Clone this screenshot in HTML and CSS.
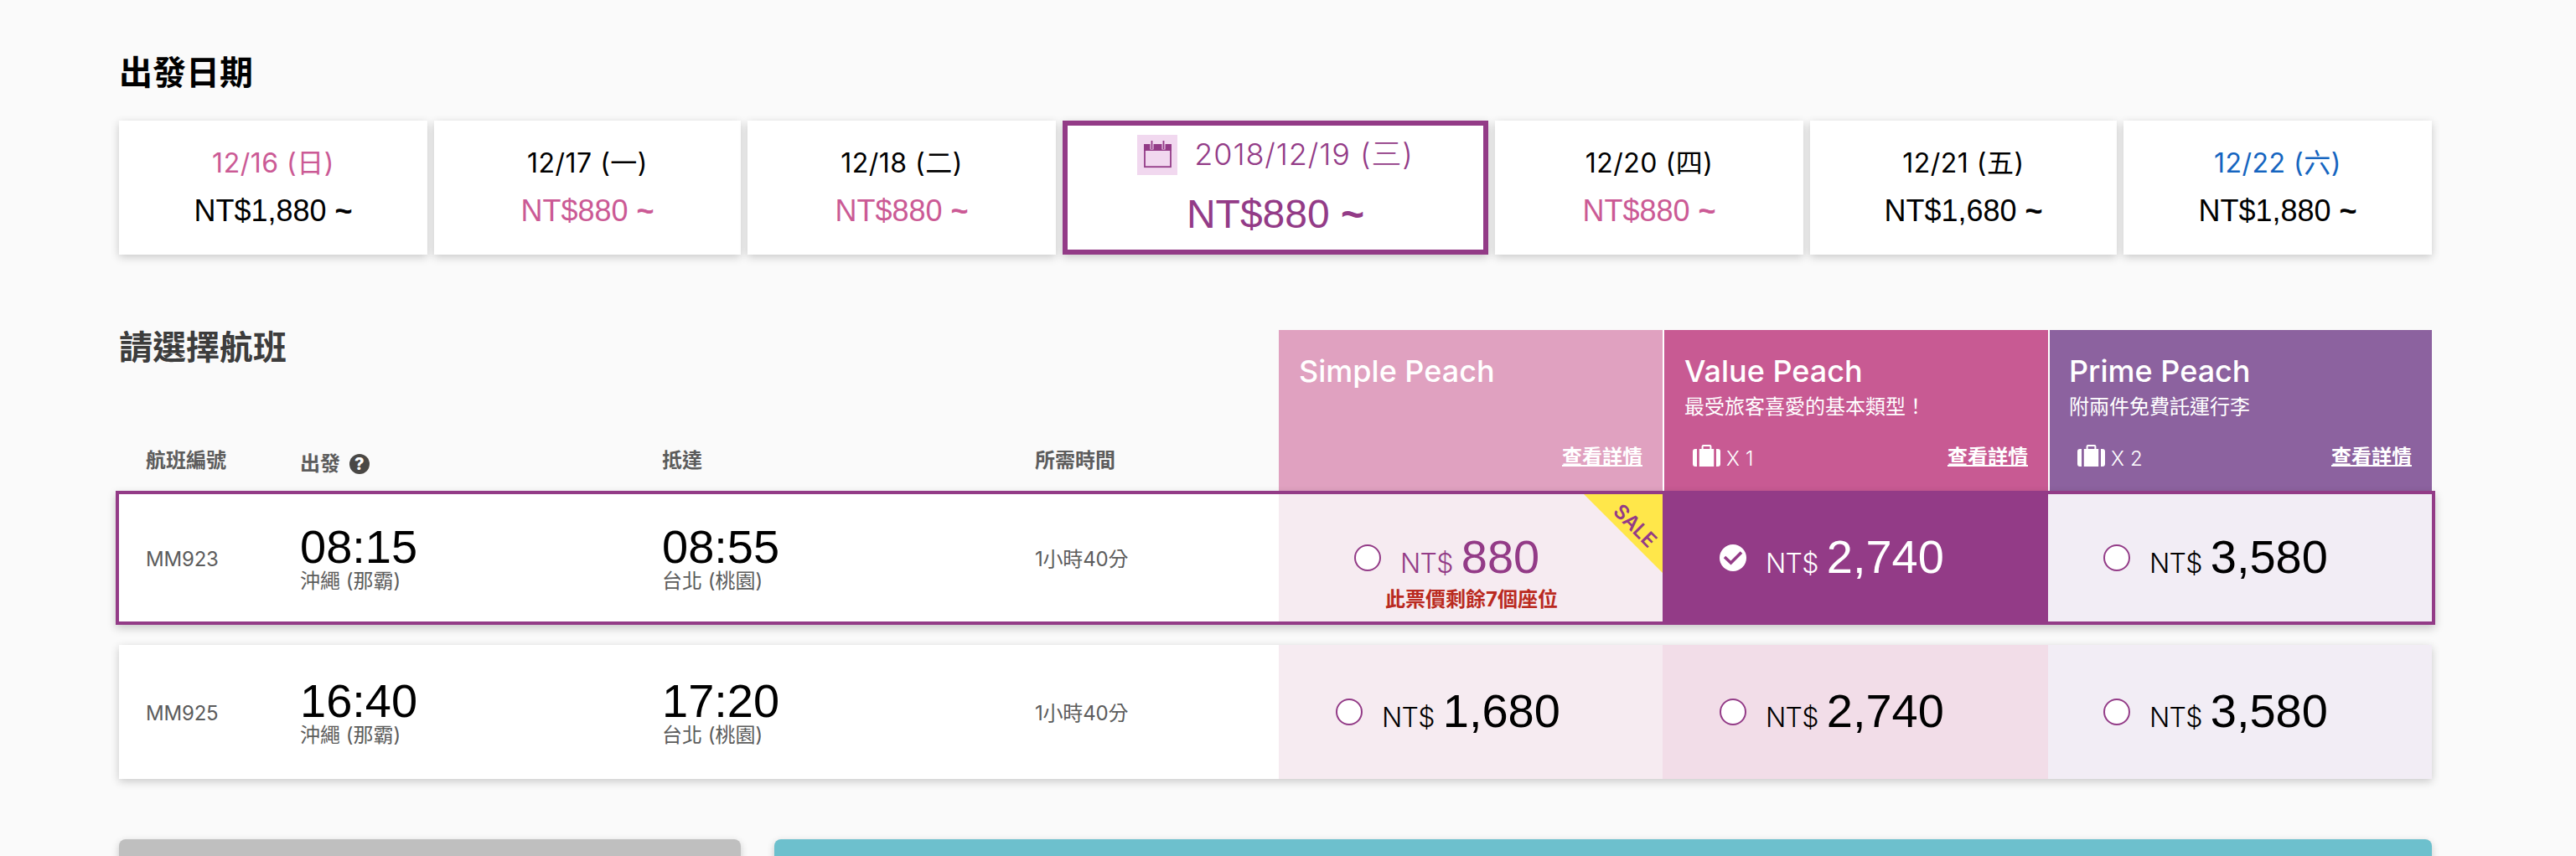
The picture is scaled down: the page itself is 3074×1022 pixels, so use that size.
FILE: index.html
```
<!DOCTYPE html>
<html lang="zh-Hant">
<head>
    <meta charset="UTF-8">
    <meta name="viewport" content="width=device-width, initial-scale=1.0">
    <title>請選擇航班</title>
    <link rel="stylesheet" href="styles.css">
</head>
<body>
    <main class="page">
        <h2 class="title title-date">出發日期</h2>
        <div class="dates">
            <div class="date-card">
                <div class="day sunday">12/16 (日)</div>
                <div class="low-price">NT$1,880 <b>~</b></div>
            </div>
            <div class="date-card narrow">
                <div class="day">12/17 (一)</div>
                <div class="low-price sale-price">NT$880 <b>~</b></div>
            </div>
            <div class="date-card">
                <div class="day">12/18 (二)</div>
                <div class="low-price sale-price">NT$880 <b>~</b></div>
            </div>
            <div class="date-card active">
                <div class="day">
                    <svg class="calendar" width="48" height="48" viewBox="0 0 48 48">
                        <rect width="48" height="48" fill="#f1d8ef"/>
                        <rect x="9" y="12" width="31" height="26.2" fill="none" stroke="#933b87" stroke-width="1.8"/>
                        <rect x="8" y="11" width="33" height="8" fill="#933b87"/>
                        <path d="M17.5 11v6.5M31.5 11v6.5" stroke="#f1d8ef" stroke-width="4"/>
                        <path d="M17.5 7v10M31.5 7v10" stroke="#933b87" stroke-width="1.8"/>
                    </svg>
                    <span>2018/12/19 (三)</span>
                </div>
                <div class="low-price">NT$880 <b>~</b></div>
            </div>
            <div class="date-card">
                <div class="day">12/20 (四)</div>
                <div class="low-price sale-price">NT$880 <b>~</b></div>
            </div>
            <div class="date-card narrow">
                <div class="day">12/21 (五)</div>
                <div class="low-price">NT$1,680 <b>~</b></div>
            </div>
            <div class="date-card">
                <div class="day saturday">12/22 (六)</div>
                <div class="low-price">NT$1,880 <b>~</b></div>
            </div>
        </div>

        <section class="flights">
            <div class="flights-head">
                <div class="head-left">
                    <h2 class="title">請選擇航班</h2>
                    <div class="labels">
                        <span>航班編號</span>
                        <span class="label-depart">出發 <i class="help">?</i></span>
                        <span>抵達</span>
                        <span>所需時間</span>
                    </div>
                </div>
                <div class="fare-head simple">
                    <h3>Simple Peach</h3>
                    <div class="fare-foot">
                        <a href="#">查看詳情</a>
                    </div>
                </div>
                <div class="fare-head value">
                    <h3>Value Peach</h3>
                    <p>最受旅客喜愛的基本類型！</p>
                    <div class="fare-foot">
                        <svg class="bag" width="33" height="26" viewBox="0 0 33 26" fill="#fff">
                            <path d="M5 5H3a3 3 0 0 0-3 3v15a3 3 0 0 0 3 3h2zM28 5h2a3 3 0 0 1 3 3v15a3 3 0 0 1-3 3h-2z"/>
                            <path d="M7.8 5h2.8V2a2 2 0 0 1 2-2h7.8a2 2 0 0 1 2 2v3h2.8v21H7.8zM12.6 2v3h7.8V2z" fill-rule="evenodd"/>
                        </svg>
                        <span>X 1</span>
                        <a href="#">查看詳情</a>
                    </div>
                </div>
                <div class="fare-head prime">
                    <h3>Prime Peach</h3>
                    <p>附兩件免費託運行李</p>
                    <div class="fare-foot">
                        <svg class="bag" width="33" height="26" viewBox="0 0 33 26" fill="#fff">
                            <path d="M5 5H3a3 3 0 0 0-3 3v15a3 3 0 0 0 3 3h2zM28 5h2a3 3 0 0 1 3 3v15a3 3 0 0 1-3 3h-2z"/>
                            <path d="M7.8 5h2.8V2a2 2 0 0 1 2-2h7.8a2 2 0 0 1 2 2v3h2.8v21H7.8zM12.6 2v3h7.8V2z" fill-rule="evenodd"/>
                        </svg>
                        <span>X 2</span>
                        <a href="#">查看詳情</a>
                    </div>
                </div>
            </div>

            <div class="flight selected">
                <div class="info">MM923</div>
                <div class="stop"><b>08:15</b><span>沖繩 (那霸)</span></div>
                <div class="stop"><b>08:55</b><span>台北 (桃園)</span></div>
                <div class="info">1小時40分</div>
                <div class="fare simple on-sale">
                    <div class="price"><span class="radio"></span><small>NT$</small>880</div>
                    <div class="note">此票價剩餘7個座位</div>
                    <div class="ribbon"><span>SALE</span></div>
                </div>
                <div class="fare value checked">
                    <div class="price">
                        <svg class="check" width="32" height="32" viewBox="0 0 32 32">
                            <circle cx="16" cy="16" r="16" fill="#fff"/>
                            <path d="M6 15l7.5 7L26 9.5" fill="none" stroke="#933b87" stroke-width="3.6"/>
                        </svg>
                        <small>NT$</small>2,740
                    </div>
                </div>
                <div class="fare prime">
                    <div class="price"><span class="radio"></span><small>NT$</small>3,580</div>
                </div>
            </div>

            <div class="flight">
                <div class="info">MM925</div>
                <div class="stop"><b>16:40</b><span>沖繩 (那霸)</span></div>
                <div class="stop"><b>17:20</b><span>台北 (桃園)</span></div>
                <div class="info">1小時40分</div>
                <div class="fare simple">
                    <div class="price"><span class="radio"></span><small>NT$</small>1,680</div>
                </div>
                <div class="fare value">
                    <div class="price"><span class="radio"></span><small>NT$</small>2,740</div>
                </div>
                <div class="fare prime">
                    <div class="price"><span class="radio"></span><small>NT$</small>3,580</div>
                </div>
            </div>
        </section>

        <div class="actions">
            <div class="btn btn-back"></div>
            <div class="btn btn-next"></div>
        </div>
    </main>
</body>
</html>
```
FILE: styles.css
```
* {
    box-sizing: border-box;
}
body {
    margin: 0;
    background-color: #fafafa;
    color: #000;
    font-family: Inter, "Noto Sans CJK TC", sans-serif;
    font-size: 24px;
}
h2, h3, p {
    margin: 0;
}
.page {
    height: 1022px;
    padding: 56px 172px 0 142px;
    overflow: hidden;
}
.title {
    font-size: 40px;
    line-height: 42px;
    font-weight: 700;
    color: #3c3c3c;
}
.title-date {
    line-height: 62px;
    margin-bottom: 26px;
    color: #000;
}

/* dates */
.dates {
    display: flex;
    gap: 8px;
}
.date-card {
    width: 368px;
    height: 160px;
    padding-top: 30px;
    background-color: #fff;
    box-shadow: 0 3px 10px rgba(0, 0, 0, 0.2);
    text-align: center;
    white-space: nowrap;
}
.date-card.narrow {
    width: 366px;
}
.day {
    font-size: 32px;
    line-height: 41px;
    margin-bottom: 15px;
    letter-spacing: 0.5px;
}
.low-price {
    font-family: "Liberation Sans", Arial, sans-serif;
    font-size: 36px;
    line-height: 44px;
}
.sunday, .sale-price {
    color: #cb5a95;
}
.saturday {
    color: #1565c0;
}
.date-card.active {
    width: 508px;
    padding-top: 10px;
    border: 6px solid #933b87;
    color: #933b87;
}
.active .day {
    display: flex;
    justify-content: center;
    align-items: center;
    gap: 20px;
    height: 48px;
    margin-bottom: 19px;
    padding-top: 1px;
    font-size: 36px;
    font-weight: 300;
    letter-spacing: 0.9px;
}
.active .low-price {
    font-size: 48px;
    line-height: 58px;
}

/* flights */
.flights {
    margin-top: 90px;
}
.flights-head {
    display: flex;
    height: 192px;
}
.head-left {
    width: 1384px;
    display: flex;
    flex-direction: column;
    justify-content: space-between;
}
.labels {
    display: grid;
    grid-template-columns: 184px 432px 445px 291px;
    padding: 0 0 14px 32px;
    line-height: 36px;
    font-weight: 700;
    color: #5c5c5c;
}
.label-depart {
    padding-top: 4px;
}
.help {
    display: inline-block;
    width: 24px;
    height: 24px;
    margin-left: 5px;
    border-radius: 50%;
    background-color: #4a4845;
    color: #fff;
    font-size: 20px;
    font-style: normal;
    font-weight: 800;
    line-height: 24px;
    text-align: center;
    vertical-align: 1px;
}
.fare-head {
    position: relative;
    z-index: 1;
    width: 458px;
    padding: 27px 24px 24px;
    display: flex;
    flex-direction: column;
    color: #fff;
}
.fare-head.simple {
    background-color: #e0a1c0;
}
.fare-head.value {
    width: 460px;
    border-left: 2px solid #fff;
    background-color: #c85a93;
}
.fare-head.prime {
    padding-left: 23px;
    border-left: 2px solid #fff;
    background-color: #8c629f;
}
.fare-head h3 {
    font-size: 36px;
    line-height: 44px;
    font-weight: 500;
}
.fare-head p {
    margin-top: 5px;
    line-height: 32px;
    font-weight: 400;
}
.fare-foot {
    display: flex;
    align-items: center;
    height: 32px;
    margin-top: auto;
    line-height: 32px;
}
.fare-foot span {
    padding-top: 3px;
    font-weight: 300;
    letter-spacing: 0.2px;
}
.fare-foot a {
    margin-left: auto;
    color: #fff;
    font-weight: 700;
    text-decoration-thickness: 2px;
    text-underline-offset: 1px;
    text-decoration-skip-ink: none;
}
.bag {
    margin: -4px 7px 0 10px;
}

.flight {
    display: grid;
    grid-template-columns: 184px 432px 445px 291px 458px 460px 458px;
    height: 160px;
    padding-left: 32px;
    background-color: #fff;
    box-shadow: 0 3px 10px rgba(0, 0, 0, 0.2);
}
.flight.selected {
    position: relative;
    z-index: 2;
    margin: 0 -4px 24px;
    border: 4px solid #933b87;
    box-shadow: 0 4px 10px rgba(0, 0, 0, 0.2);
}
.info {
    align-self: center;
    padding-top: 4px;
    line-height: 32px;
    letter-spacing: -0.2px;
    color: #5c5c5c;
}
.stop {
    display: flex;
    flex-direction: column;
    justify-content: center;
    padding-top: 6px;
}
.stop b {
    font-family: "Liberation Sans", Arial, sans-serif;
    font-size: 56px;
    line-height: 50px;
    font-weight: 400;
}
.stop span {
    line-height: 32px;
    color: #5c5c5c;
}
.fare {
    position: relative;
    display: flex;
    flex-direction: column;
    justify-content: center;
    padding-left: 68px;
}
.fare.simple {
    background-color: #f6ebf1;
}
.fare.value {
    background-color: #f2dde8;
}
.fare.prime {
    padding-left: 66px;
    background-color: #f2edf5;
}
.fare.on-sale {
    padding-left: 90px;
    color: #933b87;
}
.fare.checked {
    background-color: #933b87;
    color: #fff;
}
.price {
    display: flex;
    align-items: baseline;
    height: 60px;
    font-family: "Liberation Sans", Arial, sans-serif;
    font-size: 56px;
    line-height: 58px;
}
.price small {
    margin: 0 10px 0 23px;
    font-family: Inter, sans-serif;
    font-size: 32px;
    font-weight: 300;
    letter-spacing: -0.7px;
}
.radio, .check {
    align-self: center;
    width: 32px;
    height: 32px;
}
.radio {
    border: 2px solid #933b87;
    border-radius: 50%;
    background-color: #fff;
}
.note {
    margin: 6px 0 -34px 37px;
    line-height: 28px;
    font-weight: 700;
    color: #ba2a20;
}
.ribbon {
    position: absolute;
    top: 0;
    right: 0;
    width: 94px;
    height: 94px;
    background-color: #ffe74a;
    clip-path: polygon(0 0, 100% 0, 100% 100%);
}
.ribbon span {
    position: absolute;
    left: 61px;
    top: 38px;
    transform: translate(-50%, -50%) rotate(45deg);
    color: #933b87;
    font-weight: 600;
    line-height: 24px;
}

/* bottom buttons */
.actions {
    display: flex;
    gap: 40px;
    margin-top: 72px;
}
.btn {
    height: 96px;
    border-radius: 8px;
    box-shadow: 0 3px 10px rgba(0, 0, 0, 0.2);
}
.btn-back {
    width: 742px;
    background-color: #bfbfbf;
}
.btn-next {
    width: 1978px;
    background-color: #6dc0cd;
}
```
